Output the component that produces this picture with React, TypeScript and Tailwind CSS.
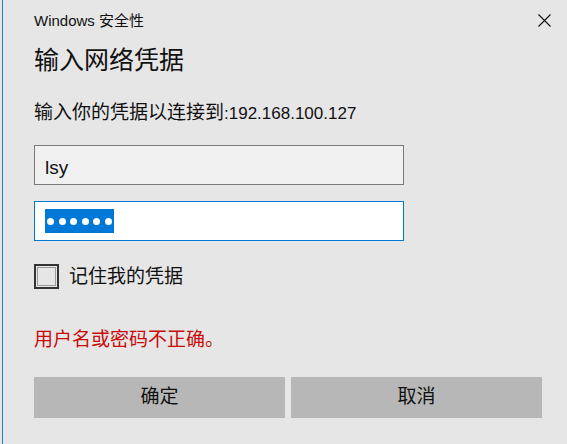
import React from "react";

const CloseIcon = () => (
  <svg width="13" height="13" viewBox="0 0 13 13" className="mt-[2px]">
    <path d="M0.5 0.5 L12.5 12.5 M12.5 0.5 L0.5 12.5" stroke="#111" strokeWidth="1.1" />
  </svg>
);

const App = () => {
  return (
    <div className="w-[567px] h-[444px] bg-[#e6e6e6] pl-[2px] text-[#111] font-['Liberation_Sans','Noto_Sans_CJK_SC',sans-serif] overflow-hidden">
      <div className="h-full border-l border-[#1883d7] pl-[31px] flex flex-col">
        {/* шапка окна */}
        <div className="flex items-start justify-between pt-[12px] pr-[16px]">
          <span className="text-[15px] leading-[18px]">Windows 安全性</span>
          <CloseIcon />
        </div>

        <h1 className="mt-[15px] text-[25px] leading-[30px]">输入网络凭据</h1>

        <p className="mt-[26px] text-[17px] leading-[24px]">
          <span className="text-[19px]">输入你的凭据以连接到</span>:192.168.100.127
        </p>

        <div className="mt-[19px] w-[370px] h-[40px] border border-[#7a7a7a] bg-[#f0f0f0] flex items-center pl-[10px] pt-[5px] text-[19px] leading-none">
          lsy
        </div>

        <div className="mt-[16px] w-[370px] h-[40px] border border-[#0078d7] bg-white flex items-center pl-[10px]">
          <span className="h-[24px] bg-[#0078d7] flex items-center gap-[4.5px] px-[2px]">
            {[0, 1, 2, 3, 4, 5].map((i) => (
              <span key={i} className="w-[7px] h-[7px] rounded-full bg-white" />
            ))}
          </span>
        </div>

        <label className="mt-[23px] flex items-center gap-[10px]">
          <span className="w-[25px] h-[25px] border-2 border-[#333333] bg-[#e6e6e6] p-[1px]">
            <span className="block w-full h-full border border-[#9a9a9a]" />
          </span>
          <span className="text-[19px] leading-[24px]">记住我的凭据</span>
        </label>

        <p className="mt-[39px] text-[19px] leading-[24px] text-[#c80a0a]">用户名或密码不正确。</p>

        <div className="mt-[25px] w-[508px] grid grid-cols-2 gap-[6px]">
          <button className="h-[41px] bg-[#b7b7b7] text-[19px] text-[#111]">确定</button>
          <button className="h-[41px] bg-[#b7b7b7] text-[19px] text-[#111]">取消</button>
        </div>
      </div>
    </div>
  );
};

export default App;
